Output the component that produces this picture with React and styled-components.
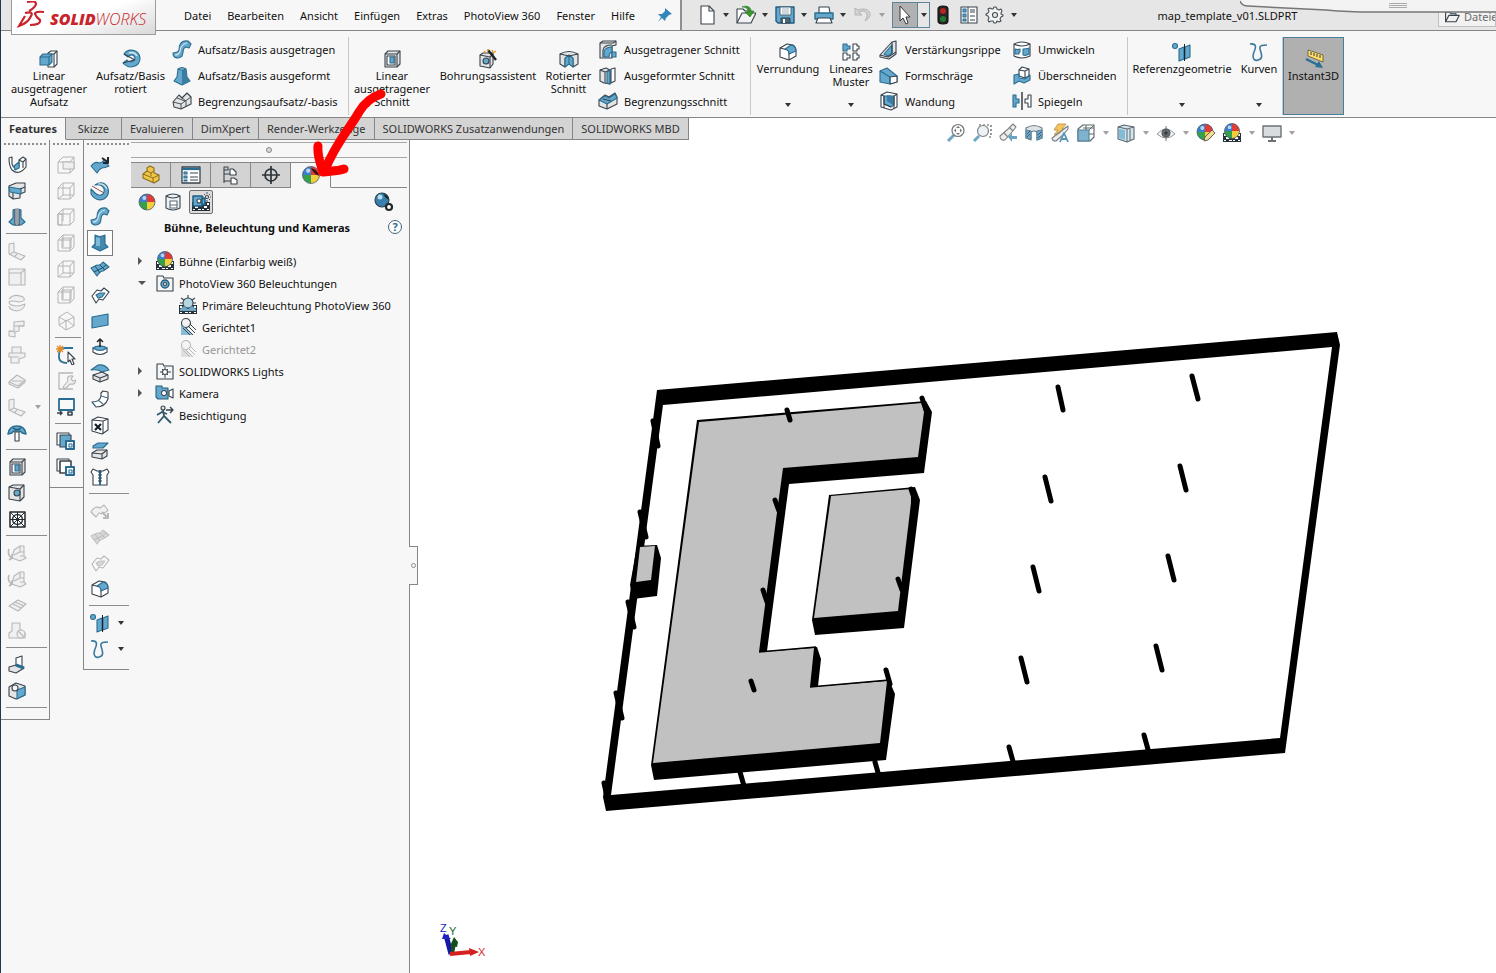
import React, { useState } from 'react';
import styled, { createGlobalStyle } from 'styled-components';

const K = '#38434c';
const B = '#64a9cd';
const D = '#2a6c90';
const L = '#d9e6ed';
const G = '#e4e4e4';
const W = '#ffffff';
const N = 'none';

const circle = (x, y, r) =>
  `M${x - r} ${y}a${r} ${r} 0 1 0 ${r * 2} 0a${r} ${r} 0 1 0 ${-r * 2} 0z`;

const ball = (x, y, r) => [
  [`M${x} ${y}V${y - r}A${r} ${r} 0 0 0 ${x - r} ${y}z`, '#3b7fd0', N],
  [`M${x} ${y}V${y - r}A${r} ${r} 0 0 1 ${x + r} ${y}z`, '#e23b36', N],
  [`M${x} ${y}H${x - r}A${r} ${r} 0 0 0 ${x} ${y + r}z`, '#35a04c', N],
  [`M${x} ${y}H${x + r}A${r} ${r} 0 0 1 ${x} ${y + r}z`, '#f0cf3a', N],
  [circle(x, y, r), N, '#4f5964', 0.8],
  [circle(x - r / 3, y - r / 2, r / 4), '#ffffffaa', N],
];

const film = [
  ['M1 10H19V19H1z', '#26313a', N],
  ['M2 11h2v2H2zM16 11h2v2h-2zM4 14h3v2H4zM13 14h3v2h-3zM2 17h2v1H2zM7 17h3v1H7zM11 17h2v1h-2zM16 17h2v1h-2z', W, N],
];

const wire = [
  ['M2 7L7 2H18V14L14 18H2zM2 7H14V18M14 7L18 2', N, '#b4b4b4', 1],
];

// every entry: [path, fill, stroke, stroke width]
const icons = {
  extrude: [
    ['M9 4L12 2H18V15L15 18H9z', W, K],
    ['M15 5L18 2M15 5V18M9 5H15', N, K],
    ['M1 8L4 5H13V13L10 16H1z', B, D],
    ['M1 8H10V16M10 8L13 5', N, D],
  ],
  revolve: [
    ['M3 5C7 -1 18 0 19 9C19 18 8 21 2 14L6 11C8 14 14 13 14 9C13 5 9 5 7 8z', B, D],
    ['M3 5L14 11M2 14L13 11', N, K],
    ['M8 4Q13 2 16 7', N, L, 1.4],
  ],
  sweep: [
    ['M1 13C1 19 7 19 10 16C12 12 10 8 14 7L17 8L19 4L16 1C8 0 7 6 7 10C6 13 5 12 1 13z', B, D],
    ['M3 15Q7 15 8 11Q9 4 15 3', N, L],
  ],
  loft: [
    ['M6 3Q10 0 14 3L15 11L18 15L10 19L2 15L5 11z', B, D],
    ['M10 4L14 3L15 11L18 15L10 19z', '#3b7da3', N],
    ['M6 3Q10 5 14 3', L, D],
  ],
  boundary: [
    ['M1 11L7 4L10 7L15 2L19 6V13L9 18L2 16z', G, K],
    ['M1 11L9 13L19 6M9 13V18M5 7L13 10M10 7L14 10V15', N, K, 0.9],
  ],
  cut: [
    ['M3 5L6 2H18V15L15 18H3z', G, K],
    ['M3 5H15V18M15 5L18 2', N, K],
    ['M5 7H13V16H5z', W, K],
    ['M8 8H12V14H8z', B, D],
  ],
  wizard: [
    ['M2 6L5 4H15V15L12 19L2 17z', G, K],
    ['M2 6L12 8V19M12 8L15 5', N, K],
    [circle(8, 12, 3), B, K],
    ['M10 1L18 11', N, '#1d2226', 2.4],
    ['M6 2l2 2M10 0v2M14 1l1 2M15 4l3-2', N, '#e59b22', 1.4],
  ],
  revcut: [
    ['M1 5Q10 0 19 5V15L14 18V10L10 7L6 10V18L1 15z', G, K],
    ['M6 9L10 6V15L6 18zM10 6L14 9V18L10 15z', B, D],
    ['M1 5L10 7L19 5', N, K],
  ],
  sweepcut: [
    ['M2 3L5 1H18V5L14 6V18H2z', G, K],
    ['M2 3H15L18 1M5 17V10Q6 5 14 5', N, K],
    ['M6 17V11Q8 7 14 7V12Q11 13 11 17zM14 12H18V17H14z', B, D],
  ],
  loftcut: [
    ['M2 4L8 2L12 4V18L6 17L2 15z', G, K],
    ['M2 4L7 6V17M7 6L12 4', N, K],
    ['M9 6L12 4V18L9 17z', B, D],
    ['M13 3L17 2V15L13 17z', W, K],
  ],
  boundcut: [
    ['M1 9L7 4L11 6L17 2L19 6V13L9 18L1 15z', G, K],
    ['M1 9L7 5L11 7L17 3L19 7L9 13z', B, D],
    ['M9 13V18M5 8L13 10', N, K],
  ],
  fillet: [
    ['M2 6L9 2L15 3Q18 5 18 9V14L11 18L2 15z', W, K],
    ['M2 6L10 8Q11 9 11 11V18', N, K],
    ['M7 7L13 3Q18 4 18 9L11 12Q11 8 7 7z', B, D],
  ],
  pattern: [
    ['M2 2H6V4H9V7H6V9H2z', B, D],
    ['M12 2H16V4H18V7H16V9H12zM2 11H6V13H9V16H6V18H2zM12 11H16V13H18V16H16V18H12z', W, K],
  ],
  rib: [
    ['M1 15L13 2L17 1V14L10 19L1 17z', G, K],
    ['M5 14L13 5V13L9 16z', B, D],
    ['M1 15L9 17L17 12M13 2V13', N, K],
  ],
  draft: [
    ['M1 5L8 2L18 10V16L11 18L1 16z', B, D],
    ['M11 11L18 10V16L11 18z', W, K],
    ['M1 5L11 11V18', N, D],
  ],
  shell: [
    ['M2 4L8 1L18 3V16L12 19L2 16z', W, K],
    ['M5 5L15 5V14L12 16L5 13z', B, D],
    ['M8 4V10L14 14V5z', '#3b7da3', N],
    ['M2 4L5 5V17M15 5L18 3M15 5V17M5 13L12 16', N, K],
  ],
  wrap: [
    ['M2 4Q10 0 18 4V16Q10 20 2 16z', W, K],
    ['M2 4Q10 8 18 4', N, K],
    ['M3 9Q6 10 8 9V12H7V14Q5 14 3 14zM11 9Q15 9 17 8V14Q14 16 11 15z', B, D],
  ],
  intersect: [
    ['M7 4L10 1L17 3V10L13 12L7 10z', W, K],
    ['M7 4L13 5V12M13 5L17 3', N, K],
    ['M2 9L7 8V12L13 13L18 9V14L12 17L7 15L2 18z', B, D],
  ],
  mirror: [
    ['M1 4H4V8H7V12H4V16H1z', B, D],
    ['M19 4H16V8H13V12H16V16H19z', W, K],
    ['M10 1V19', N, '#1d2226', 1.3],
  ],
  refgeo: [
    [circle(3, 4, 2.5), B, D],
    ['M7 7L12 5V17L7 19zM13 5L18 3V15L13 17z', B, D],
    ['M12.5 2V19', N, '#1d2226', 1],
  ],
  curves: [['M1 2C8 1 7 6 5 10C2 18 7 19 9 18C15 17 12 11 11 7C10 3 14 3 18 3', N, '#3d7a9d', 1.6]],
  instant: [
    ['M4 1L19 6V13L4 7z', '#ffdf66', '#5d5330', 0.8],
    ['M7 3v3M10 4v3M13 5v3M16 6v3', N, K],
    ['M2 10L14 16', N, '#2b7093', 2.4],
    ['M11 18L19 19L15 12z', '#2b7093', N],
  ],
  pin: [['M10 3L17 9L14 10L11 13L10 16L7 13L3 17L6 12L3 9L7 9L10 6z', '#3586b8', N]],
  file: [['M4 1H12L17 6V19H4z', W, K], ['M12 1V6H17', N, K]],
  open: [
    ['M1 18V4H7L9 6H15V9', W, K],
    ['M1 18L6 8H20L15 18z', '#f1f3f4', K],
    ['M6 2C11 2 12 4 12 7H9L14 12L18 6H15C15 2 11 0 6 2z', '#3c982e', '#24731f', 0.6],
  ],
  save: [
    ['M1 2H19V18H3L1 16z', B, '#1f5e82', 1.4],
    ['M5 2H16V10H5z', W, '#4d6675', 1],
    ['M7 4h7M7 6h7M7 8h7', N, '#8ea0ab', 0.8],
    ['M6 13H15V18H6z', '#49687c', K, 1],
    ['M8 14H10V18H8z', W, N],
  ],
  print: [
    ['M5 8V2H15L16 8', W, K],
    ['M1 8H19V14H1z', B, D, 1.4],
    ['M4 13H16L18 18H2z', W, K],
  ],
  undo: [['M2 3V10H9L6 7C12 4 17 8 12 16C22 10 16 1 5 5z', '#d2d2d2', '#b5b5b5', 1]],
  cursor: [['M5 1V16L8 13L11 19L13 18L11 12H15z', W, '#30373d', 1]],
  traffic: [
    ['M10 1Q15 1 15 4V16Q15 19 10 19Q5 19 5 16V4Q5 1 10 1z', '#252525', '#111'],
    [circle(10, 6, 3), '#b52525', N],
    [circle(10, 14, 3), '#1d7a35', N],
  ],
  list: [
    ['M2 2H18V18H2z', W, K],
    ['M4 4h3v3H4zM4 9h3v3H4zM4 14h3v2H4z', B, D],
    ['M9 2V18M11 5h5M11 7h5M11 11h5M11 15h5', N, K, 1],
  ],
  gear: [
    ['M9 2h2l1 2 2 1 2-1 1 2-1 2 0 1 2 1v1l-2 1-1 2 1 2-2 1-2-1-1 2h-2l-1-2-2 0-2 1-1-2 1-2-1-2-2-1v-1l2-1 1-2-1-2 2-1 2 1 1 0z', '#f4f4f4', '#454e55'],
    [circle(10, 10, 2.5), '#eaeaea', '#454e55'],
  ],
  folder: [['M2 16V4H7L9 6H15V8M2 16L6 8H19L15 16z', N, K, 1.4]],
  zoomfit: [
    ['M2 18L8 12', N, '#6fa6c4', 3],
    [circle(12, 7.5, 6), '#fbfbfb', '#70777c', 1.2],
    ['M12 3l2 2h-4zM12 12l2-2h-4zM8 7.5l2-2v4zM16 7.5l-2-2v4z', '#70777c', N],
  ],
  zoomarea: [
    ['M7 2H9M11 2H13M15 2H17M19 2V4M19 6V8M19 10V12M19 14H17', N, '#555', 1.2],
    ['M2 18L7 13', N, '#6fa6c4', 3],
    [circle(11, 8, 5.5), '#eef2f4', '#7c8387', 1.2],
  ],
  prev: [
    ['M2 13L10 6L15 1L18 4L14 9L7 17Q2 18 2 13z', '#ececec', '#7d8387'],
    ['M6 10L10 14M12 5L15 8', N, '#7d8387'],
    ['M10 14L14 10V13H19V16H14V19z', '#6aa3c1', N],
  ],
  section: [
    ['M2 5Q10 0 18 5V15L13 17V9Q10 7 7 9V17L2 15z', '#dfe3e5', '#747b80'],
    ['M2 7L7 8V16L2 15zM13 8L18 7V15L13 17z', '#6ea9c8', '#55859f'],
    ['M3 11l3-3M3 14l3-3M14 12l3-3M14 15l3-3', N, '#345c70', 1],
  ],
  style: [
    ['M8 1H16L12 6H15L4 12L8 7H4z', '#f5c55c', '#b48b44', 0.8],
    ['M2 15L9 10L15 5L18 3L18 6L13 12L6 18Q2 18 2 15z', '#ececec', '#787f84'],
    ['M10 19L14 10L18 19M12 16H16', N, '#5795b5', 1.8],
  ],
  orient: [
    ['M2 6L7 2H18V14L14 18H2z', W, '#5c666d'],
    ['M2 7H13V18H2z', '#7fb3cd', '#4f7f98'],
    ['M13 7L18 2M7 5H18M10 2V7M13 11H18', N, '#5c666d', 1],
  ],
  display: [
    ['M2 4L8 2L18 4V16L11 19L2 16z', '#d3e5ee', '#5c666d'],
    ['M2 4L11 6V19M11 6L18 4M14 6V17', N, '#5c666d', 1],
    ['M3 6L9 7V17L3 15z', '#83bad5', N],
  ],
  eye: [
    ['M1 11Q10 1 19 11Q10 19 1 11z', '#f4f4f4', '#909598', 1],
    [circle(10, 10, 4), '#656c71', '#50575c'],
    [circle(10, 10, 1.5), '#222', N],
    ['M10 3V18', N, '#555', 0.8],
  ],
  paint: [...ball(9, 9, 8), ['M9 14L16 7L19 10L12 17L8 18z', '#f1dc97', '#6b604a', 1]],
  scene: [...film, ...ball(10, 8, 7.5)],
  monitor: [
    ['M1 3H19V14H1z', '#d9dcde', '#6b7378', 1.4],
    ['M10 14V17M6 18H14', N, '#6b7378', 2],
  ],
  part: [
    ['M2 9L6 6V3L9 1L13 3V8L18 10V15L13 18L2 13z', '#f1c644', '#8a6d1f'],
    ['M2 9L12 13L18 10M12 13V18M6 6L10 8V11M10 8L13 6', N, '#8a6d1f', 1],
  ],
  property: [
    ['M1 2H19V18H1z', W, K, 1.3],
    ['M1 4H19', N, D, 2.2],
    ['M3 7h3v2H3zM3 11h3v2H3zM3 15h3v1H3z', B, D],
    ['M9 8h8M9 12h8M9 15h8', N, K, 1],
  ],
  config: [
    ['M3 2H7V5H3zM3 5V18M3 9H10M3 16H10', N, K],
    ['M9 4H12L15 7V10H9zM10 13H13L16 15V19H10z', W, K],
  ],
  target: [[circle(10, 10, 6), N, '#2c343a', 1.7], ['M10 1V19M1 10H19', N, '#2c343a', 1.7]],
  appearance: [...ball(10, 10, 8.5), ['M10 3Q16 4 18 11Q13 9 10 3z', '#2b1710', N]],
  ball: ball(10, 10, 8),
  decal: [
    ['M3 4Q10 0 17 4V16Q10 20 3 16z', '#eef1f3', K],
    ['M3 4Q10 8 17 4', N, K],
    ['M7 9H14V16H7zM7 13H14', W, '#5b6c77'],
  ],
  stage: [
    ...film,
    ['M2 4H11V14H2zM11 7L14 6V13L11 12z', B, '#1f5e82', 1.5],
    [circle(8, 9, 2), W, K],
    [circle(16, 5, 1.5), W, K],
    ['M16 0v2M16 8v2M11 5h2M19 5h1M13 2l1 1M19 2l-1 1M19 8l-1-1', N, K, 0.9],
  ],
  options: [
    [circle(8, 8, 7), '#397fab', '#243e4e'],
    [circle(6, 5, 2.5), '#b7dced', N],
    ['M9 2Q14 3 15 8L12 6z', '#1d2226', N],
    [circle(15, 15, 3), W, '#20272c', 2.2],
  ],
  pvfolder: [
    ['M2 18V3H8L9 5H18V18z', '#f4f6f7', K],
    [circle(10, 11, 4), B, '#275a76', 1.3],
    [circle(10, 11, 1.5), W, K],
  ],
  primary: [
    ...film,
    ['M10 0v3M3 3l3 2M17 3l-3 2M2 8h3M15 8h3', N, K],
    [circle(10, 8, 5), '#b5d6e4', K],
    ['M2 14L6 11L10 14L14 11L18 14V16H2z', '#6ea8c4', N],
  ],
  light: [
    ['M3 6V18H15z', '#89bdd6', N],
    [circle(8, 6, 4.5), '#f2f2f2', K],
    ['M5 11L12 18M8 11L15 18M11 10L17 16M12 7L18 13', N, K, 1],
  ],
  swfolder: [
    ['M2 18V3H8L9 5H18V18z', '#f4f6f7', K],
    [circle(10, 11, 2.5), W, K],
    ['M10 6v2M10 14v3M5 11h2M13 11h3M7 8l1 1M13 8l-1 1M7 14l1-1M13 14l-1-1', N, K, 1],
  ],
  camera: [
    ['M1 3H7V5H13V16H3L1 14z', B, '#285f7d'],
    ['M14 8L18 6V15L14 13z', W, K],
    [circle(9, 10, 2.5), W, K],
  ],
  walk: [
    [circle(8, 3, 2), L, K],
    ['M8 5L9 11L3 18M9 11L16 18M2 10L7 7L12 9', N, '#34596c', 1.8],
    ['M11 5H18M15 2L18 5L15 8', N, K, 1.4],
  ],
  ubend: [
    ['M2 3L5 2V9Q7 15 12 12V5L16 2L19 4V12Q12 21 5 15Q2 11 2 3z', W, K],
    ['M7 11L12 7V13L8 15z', B, D],
    ['M12 5L16 7L19 4M16 7V13', N, K],
  ],
  jog: [
    ['M2 5L9 2H18V11L13 13V17L6 18L2 15z', G, K],
    ['M2 6L14 8V13L3 11z', B, D],
    ['M13 8L18 6M6 12V18', N, K],
  ],
  split: [
    ['M6 3Q10 1 14 3V11L18 15L14 18H6L2 15L6 11z', B, D],
    ['M8 2V18H12V2', W, K],
    ['M10 2V17', N, K, 1],
  ],
  sheet: [['M2 3L7 2V11L18 15L14 19L2 13z', G, K], ['M7 11L3 13M10 13l-3 3', N, K]],
  miter: [['M2 2H18V18H2zM2 6H14V18M14 6L18 2', G, K]],
  hem: [['M2 6Q7 0 16 4Q20 8 12 9Q3 7 2 9Q2 13 12 13L18 11Q17 17 10 18Q2 17 2 13', G, K]],
  step: [['M7 3L17 2V7H12V12L8 13V18L2 17V12H7z', G, K], ['M7 7H17M2 12L8 13', N, K]],
  stack: [['M5 2H14V8H18V12L12 14V18H4V12H2V8H5z', G, K], ['M5 8H14M4 12H12', N, K]],
  flat: [['M2 11L10 4L18 9L11 15z', G, K], ['M2 11V13L11 17L18 11V9M5 10L15 10', N, K]],
  mushroom: [
    ['M1 11Q2 3 10 3Q18 3 19 11L15 10Q14 8 12 8H8Q6 8 5 10z', B, D, 1.5],
    ['M8 9H12V18H8z', W, K],
    ['M6 5Q10 8 14 5', N, '#1f4f69'],
  ],
  hole: [['M2 4L6 2H17V14L13 18L2 16z', G, K], ['M2 4L13 6V18M13 6L17 2', N, K], [circle(10, 10, 3), B, K]],
  vent: [
    ['M3 3H18V18H3z', W, '#22282d', 1.5],
    [circle(10.5, 10.5, 5), N, K, 1.5],
    ['M3 3L18 18M18 3L3 18M10.5 3V18M3 10.5H18', N, '#22282d', 1],
  ],
  unfold: [
    ['M7 7L13 3H17V13L19 15L13 18L5 15z', G, K],
    ['M7 12L13 9V3M13 9H17M13 13L17 13', N, K],
    ['M2 6Q0 12 5 15L2 17M5 15V11', N, K, 1.6],
  ],
  grid: [['M2 11L11 5L19 9L11 16z', G, K], ['M6 9L14 13M8 7L17 11', N, K]],
  deny: [['M5 2H13V9L18 12V17H2V12L5 10z', G, K], [circle(14, 13, 4), G, K], ['M11 10l6 6', N, K]],
  corner: [['M9 3L15 1V12L9 15z', W, K], ['M2 12L9 10L17 13L9 18L2 16z', G, K], ['M9 10L17 13', N, D, 3]],
  gusset: [
    ['M2 6L9 2L18 5V14L9 18L2 15z', G, K],
    ['M10 9L18 6V14L10 18z', B, D],
    [circle(8, 7, 3), '#f6f6f6', K],
  ],
  wire1: [...wire, ['M7 7H18V14H7z', '#efefef', '#b4b4b4', 1]],
  wire2: [...wire, ['M7 2V14H18M7 14L2 18', N, '#b4b4b4', 1]],
  wire3: [...wire, ['M2 7V18H6V7zM7 2V14', N, '#b4b4b4', 1]],
  wire4: [...wire, ['M6 5H15V15H6zM7 2V14', N, '#b4b4b4', 1]],
  wireiso: [['M3 6L11 1L18 6V15L10 19L3 14zM3 6L10 10L18 6M10 10V19M3 14L11 9L18 15', N, '#b4b4b4', 1]],
  sketch: [
    ['M17 3H9Q3 3 3 10V13Q4 18 11 18', N, '#2f7397', 1.8],
    ['M4 0v8M0 4h8M1 1l6 6M7 1L1 7', N, '#e58b24', 1.3],
    ['M12 7V17L14 15L16 20L18 19L16 14H19z', W, K],
  ],
  repair: [['M17 2H3V18H17', N, K, 1.3], ['M7 16L12 10Q10 4 17 5L15 8L17 10L20 9Q19 14 14 13L9 18z', G, K]],
  convert: [
    ['M3 2H18V13H3z', '#f9f9f9', '#286c92', 1.8],
    ['M1 16H6M4 14L6 16L4 18M12 15H16V18H12z', N, K, 1.6],
  ],
  copies: [
    ['M1 2H13V14H1z', W, K],
    ['M4 4H15V16H4z', B, K],
    ['M10 10H18V18H10z', W, D, 2],
    ['M13 13h3v3h-3z', W, D],
  ],
  copies2: [
    ['M1 2H13V14H1z', W, K],
    ['M4 4H15V16H4z', W, K, 1.6],
    ['M10 10H18V18H10z', W, D, 2],
    ['M13 13h3v3h-3z', W, D],
  ],
  surface: [['M1 11Q5 6 9 8Q12 8 14 5L19 11Q15 13 12 13Q9 14 7 18z', B, D], ['M12 3L18 7M18 2V8H13', N, '#20272c', 2]],
  ring: [
    ['M5 4Q12 -1 17 5Q21 13 14 18Q6 21 1 13L1 8L5 12Q9 16 13 13Q16 8 12 5Q9 3 5 4z', B, D],
    ['M2 5L14 12', N, '#9a4b4b', 1],
    ['M8 3Q14 2 17 8', N, L],
  ],
  loftsurf: [
    ['M5 2Q10 5 15 2V11L18 14L10 18L2 14L5 11z', '#4389b0', D],
    ['M6 4Q8 5 10 5V13H6z', '#7fbbd9', N],
  ],
  patch: [
    ['M1 9L7 6Q10 7 13 3L19 8L13 12Q10 12 7 17z', B, D],
    ['M4 13L10 10Q13 9 16 6M5 7L10 14M10 6L15 11', N, '#1f4f69', 1],
  ],
  offset: [['M2 11L7 5L11 6L14 3L19 7L13 15L9 14L6 18z', W, K], ['M6 10L10 8L15 8L12 12L8 13z', B, D]],
  plane: [['M2 6L18 3V14L2 17z', B, D, 1.2]],
  knit: [
    ['M3 11Q10 7 17 11V15Q10 20 3 15z', W, K],
    ['M3 11Q10 7 17 11Q10 16 3 11z', B, D],
    ['M10 10V2M7 5L10 2L13 5', N, '#20272c', 1.5],
  ],
  thicken: [['M1 7L8 2Q15 1 19 7L12 9Q8 6 1 7z', B, D], ['M3 12L12 9L18 12V16L10 19L3 16z', G, K], ['M3 12L10 15L18 12M10 15V19', N, K]],
  elbow: [['M13 2L18 3V10Q15 18 6 18L2 13Q10 13 11 7V4z', W, K], ['M11 7L18 9M2 13L6 18M8 11L13 15', N, '#40728b']],
  delface: [['M2 5L8 2L18 4V15L12 19L2 16z', W, K], ['M2 5L13 6V19M13 6L18 4', N, K], ['M5 9l6 6M11 9l-6 6', N, '#152027', 2.2]],
  replace: [['M3 5L8 2H18L13 7L3 7z', B, D], ['M2 12L7 9H17V15L12 18L2 16z', G, K], ['M2 12L12 13V18M12 13L17 9', N, K]],
  zip: [
    ['M3 2L7 4H13L17 2L19 5L17 8V18H3V8L1 5z', W, K],
    ['M10 3V18', N, D, 2],
    ['M8 5h4M8 8h4M8 11h4M8 14h4', N, K, 1],
  ],
  trim: [['M1 11Q5 4 10 7L14 4L18 9Q14 14 9 12L6 16z', G, K], ['M12 11l6 6M18 12v5h-5', N, K, 2]],
};

function Icon({ name, dim }) {
  return (
    <Glyph viewBox="0 0 20 20" $dim={dim} aria-hidden="true">
      {icons[name].map(([d, fill, stroke, width = 1.1], i) => (
        <path key={i} d={d} fill={fill} stroke={stroke} strokeWidth={width} strokeLinejoin="round" />
      ))}
    </Glyph>
  );
}

const menus = ['Datei', 'Bearbeiten', 'Ansicht', 'Einfügen', 'Extras', 'PhotoView 360', 'Fenster', 'Hilfe'];

const quick = [
  ['file', 'Neu'],
  ['open', 'Öffnen'],
  ['save', 'Speichern'],
  ['print', 'Drucken'],
  ['undo', 'Rückgängig'],
];

const tabs = [
  'Features',
  'Skizze',
  'Evaluieren',
  'DimXpert',
  'Render-Werkzeuge',
  'SOLIDWORKS Zusatzanwendungen',
  'SOLIDWORKS MBD',
];

const hud = [
  ['zoomfit'],
  ['zoomarea'],
  ['prev'],
  ['section'],
  ['style'],
  ['orient', true],
  ['display', true],
  ['eye', true],
  ['paint'],
  ['scene', true],
  ['monitor', true],
];

// '-' is a separator, '!' greys a tool out, '*' marks the pressed one, '>' adds a menu arrow
const sheetTools = [
  'ubend', 'jog', 'split', '-',
  '!sheet', '!miter', '!hem', '!step', '!stack', '!flat', '!sheet>', 'mushroom', '-',
  'cut', 'hole', 'vent', '-',
  '!unfold', '!unfold', '!grid', '!deny', '-',
  'corner', 'gusset', '-',
];
const viewTools = [
  'wire1', 'wire2', 'wire3', 'wire4', 'wire2', 'wire4', 'wireiso', '-',
  'sketch', '!repair', 'convert', '-',
  'copies', 'copies2',
];
const surfaceTools = [
  'surface', 'ring', 'sweep', '*loftsurf', 'patch', 'offset', 'plane', 'knit', 'thicken',
  'elbow', 'delface', 'replace', 'zip', '-',
  '!trim', '!patch', '!offset', 'fillet', '-',
  'refgeo>', 'curves>',
];

const tree = [
  { icon: 'scene', label: 'Bühne (Einfarbig weiß)', arrow: 'right' },
  { icon: 'pvfolder', label: 'PhotoView 360 Beleuchtungen', arrow: 'down' },
  { icon: 'primary', label: 'Primäre Beleuchtung PhotoView 360', level: 1 },
  { icon: 'light', label: 'Gerichtet1', level: 1 },
  { icon: 'light', label: 'Gerichtet2', level: 1, off: true },
  { icon: 'swfolder', label: 'SOLIDWORKS Lights', arrow: 'right' },
  { icon: 'camera', label: 'Kamera', arrow: 'right' },
  { icon: 'walk', label: 'Besichtigung' },
];

const poles = [
  [1058, 387, 5, 23], [1192, 376, 6, 23], [1045, 477, 6, 24], [1180, 466, 6, 24],
  [1033, 567, 6, 24], [1168, 556, 6, 24], [1021, 658, 6, 24], [1156, 646, 6, 24],
  [1009, 747, 5, 18], [1144, 735, 5, 18], [740, 772, 4, 14], [875, 762, 4, 14],
  [787, 410, 3, 10], [922, 398, 4, 12], [775, 500, 4, 11], [763, 590, 4, 12],
  [751, 681, 3, 9], [886, 670, 4, 14], [911, 489, 4, 12], [898, 579, 4, 11],
  [653, 421, 5, 25], [640, 512, 6, 25], [628, 602, 6, 25], [616, 693, 6, 25],
  [604, 783, 3, 14],
];

function Toolbar({ tools, label, width }) {
  return (
    <Bar role="toolbar" aria-label={label} $width={width}>
      <Grip />
      {tools.map((tool, i) => {
        if (tool === '-') return <Rule key={i} />;
        const name = tool.replace(/[!*>]/g, '');
        return (
          <ToolRow key={i}>
            <Tool type="button" aria-label={name} disabled={tool[0] === '!'} $on={tool[0] === '*'}>
              <Icon name={name} dim={tool[0] === '!'} />
            </Tool>
            {tool.endsWith('>') && <Caret $muted={tool[0] === '!'} />}
          </ToolRow>
        );
      })}
    </Bar>
  );
}

function Big({ icon, lines, width, menu, on }) {
  return (
    <BigButton type="button" $width={width} $menu={menu} $on={on}>
      <Icon name={icon} />
      {lines.map((line) => (
        <span key={line}>{line}</span>
      ))}
      {menu && <Caret />}
    </BigButton>
  );
}

function Stack({ items, width }) {
  return (
    <StackColumn $width={width}>
      {items.map(([icon, label]) => (
        <SmallButton type="button" key={label}>
          <Icon name={icon} />
          {label}
        </SmallButton>
      ))}
    </StackColumn>
  );
}

function Model() {
  return (
    <Drawing viewBox="410 140 1086 833" role="img" aria-label="map_template_v01">
      <path
        fillRule="evenodd"
        d="M657 390L1337 332L1340 345L1285 753L606 811L603 797zM663 405L611 795L1280 738L1332 347z"
      />
      <path d="M697 420L926 401L932 412L924 473L789 484L767 651L817 647L821 659L818 686L889 680L895 694L886 760L654 780L651 765z" />
      <path
        fill="#c1c1c1"
        d="M699 422L922 403L924 412L918 457L783 468L776 520L759 652L814 648L810 687L887 681L880 743L653 763z"
      />
      <path d="M829 495L915 487L920 500L904 628L815 635L812 620z" />
      <path fill="#c1c1c1" d="M831 496L911 489L911 503L898 611L814 618z" />
      <path d="M637 546L657 545L661 558L657 596L633 599L630 585z" />
      <path fill="#c1c1c1" d="M640 547L655 546L651 580L636 582z" />
      <path d="M759 652L816 647M810 687L889 680" stroke="#000" strokeWidth="1.4" />
      {poles.map(([x, y, dx, dy]) => (
        <path key={`${x}-${y}`} d={`M${x} ${y}l${dx} ${dy}`} stroke="#000" strokeWidth="5" strokeLinecap="round" />
      ))}
    </Drawing>
  );
}

function App() {
  const [tab, setTab] = useState('Features');
  const [selected, setSelected] = useState(null);

  return (
    <Page>
      <GlobalStyle />
      <TitleBar>
        <MenuArea>
          <Logo>
            <svg viewBox="0 0 30 28" width="30" height="28" aria-hidden="true">
              <path
                d="M11 1Q20 -1 20 3Q19 7 13 10M9 12Q18 10 15 15Q12 22 3 25L9 15M28 11Q19 10 19 13Q20 16 24 19Q25 24 14 24"
                fill="none"
                stroke="#c9242b"
                strokeWidth="2.2"
              />
            </svg>
            <b>SOLID</b>
            <i>WORKS</i>
          </Logo>
          <Menu>
            {menus.map((item) => (
              <button type="button" key={item}>
                {item}
              </button>
            ))}
          </Menu>
          <Plain type="button" aria-label="Anheften">
            <Icon name="pin" />
          </Plain>
        </MenuArea>
        <Quick>
          {quick.map(([icon, label]) => (
            <Split key={icon}>
              <Plain type="button" aria-label={label}>
                <Icon name={icon} />
              </Plain>
              <Caret $muted={icon === 'undo'} />
            </Split>
          ))}
          <Picker>
            <Plain type="button" aria-label="Auswählen">
              <Icon name="cursor" />
            </Plain>
            <Caret />
          </Picker>
          <QuickTail>
            <Icon name="traffic" />
            <Icon name="list" />
            <Icon name="gear" />
            <Caret />
          </QuickTail>
        </Quick>
        <FileName>map_template_v01.SLDPRT</FileName>
        <Search>
          <Icon name="folder" />
          <input aria-label="Suche" placeholder="Dateien und Modelle durchsuchen" />
        </Search>
        <Flyout viewBox="0 0 256 16" aria-hidden="true">
          <path d="M0 0Q2 6 8 6L86 10Q110 12 130 12H256V0z" fill="#f3f3f3" />
          <path d="M0 1Q2 6 8 6L86 10Q110 12 130 12H256" fill="none" stroke="#777" strokeWidth="1.5" />
          <path d="M149 3.5h18M149 5.5h18M149 7.5h18" stroke="#a9a9a9" strokeWidth="1" />
        </Flyout>
      </TitleBar>

      <Ribbon>
        <Big icon="extrude" lines={['Linear', 'ausgetragener', 'Aufsatz']} width={84} />
        <Big icon="revolve" lines={['Aufsatz/Basis', 'rotiert']} width={79} />
        <Stack
          width={178}
          items={[
            ['sweep', 'Aufsatz/Basis ausgetragen'],
            ['loft', 'Aufsatz/Basis ausgeformt'],
            ['boundary', 'Begrenzungsaufsatz/-basis'],
          ]}
        />
        <Divider />
        <Big icon="cut" lines={['Linear', 'ausgetragener', 'Schnitt']} width={86} />
        <Big icon="wizard" lines={['Bohrungsassistent']} width={106} />
        <Big icon="revcut" lines={['Rotierter', 'Schnitt']} width={55} />
        <Stack
          width={154}
          items={[
            ['sweepcut', 'Ausgetragener Schnitt'],
            ['loftcut', 'Ausgeformter Schnitt'],
            ['boundcut', 'Begrenzungsschnitt'],
          ]}
        />
        <Divider />
        <Big icon="fillet" lines={['Verrundung']} width={74} menu />
        <Big icon="pattern" lines={['Lineares', 'Muster']} width={52} menu />
        <Stack
          width={133}
          items={[
            ['rib', 'Verstärkungsrippe'],
            ['draft', 'Formschräge'],
            ['shell', 'Wandung'],
          ]}
        />
        <Stack
          width={117}
          items={[
            ['wrap', 'Umwickeln'],
            ['intersect', 'Überschneiden'],
            ['mirror', 'Spiegeln'],
          ]}
        />
        <Divider />
        <Big icon="refgeo" lines={['Referenzgeometrie']} width={108} menu />
        <Big icon="curves" lines={['Kurven']} width={46} menu />
        <Divider />
        <Big icon="instant" lines={['Instant3D']} width={61} on />
      </Ribbon>

      <TabRow>
        <Tabs role="tablist">
          {tabs.map((item) => (
            <Tab
              type="button"
              role="tab"
              key={item}
              aria-selected={item === tab}
              $on={item === tab}
              onClick={() => setTab(item)}
            >
              {item}
            </Tab>
          ))}
        </Tabs>
        <Hud>
          {hud.map(([icon, menu]) => (
            <HudItem key={icon}>
              <Plain type="button" aria-label={icon}>
                <Icon name={icon} />
              </Plain>
              {menu ? <Caret $muted /> : null}
            </HudItem>
          ))}
        </Hud>
      </TabRow>

      <Workspace>
        <Side>
          <Toolbar tools={sheetTools} label="Blech" width={49} />
          <Toolbar tools={viewTools} label="Ansichten" width={34} />
          <Toolbar tools={surfaceTools} label="Oberflächen" width={46} />
          <Manager>
            <PanelGrip>
              <i />
            </PanelGrip>
            <ManagerTabs>
              {['part', 'property', 'config', 'target', 'appearance'].map((name) => (
                <ManagerTab type="button" key={name} aria-label={name} $on={name === 'appearance'}>
                  <Icon name={name} />
                </ManagerTab>
              ))}
              <TabRest />
            </ManagerTabs>
            <PanelTools>
              <Plain type="button" aria-label="Erscheinungsbilder">
                <Icon name="ball" />
              </Plain>
              <Plain type="button" aria-label="Abziehbilder">
                <Icon name="decal" />
              </Plain>
              <Pressed type="button" aria-label="Bühne">
                <Icon name="stage" />
              </Pressed>
              <Plain type="button" aria-label="Optionen">
                <Icon name="options" />
              </Plain>
            </PanelTools>
            <PanelTitle>
              <h2>Bühne, Beleuchtung und Kameras</h2>
              <Help type="button">?</Help>
            </PanelTitle>
            <Tree>
              {tree.map((node) => (
                <Node key={node.label} $level={node.level} $off={node.off}>
                  <Twist>{node.arrow && <Triangle $down={node.arrow === 'down'} />}</Twist>
                  <button type="button" onClick={() => setSelected(node.label)} aria-pressed={selected === node.label}>
                    <Icon name={node.icon} dim={node.off} />
                    {node.label}
                  </button>
                </Node>
              ))}
            </Tree>
          </Manager>
        </Side>
        <Viewport>
          <Handle>
            <i />
          </Handle>
          <Model />
          <Triad viewBox="0 0 52 40">
            <path d="M18 32L13 13" stroke="#1717a8" strokeWidth="5" />
            <path d="M9 17L11 11L18 17z" fill="#2222c0" />
            <path d="M19 32L21 21" stroke="#14501c" strokeWidth="4" />
            <path d="M17 24L21 15L25 20L24 25z" fill="#14501c" />
            <path d="M17 32L38 30" stroke="#d61f1f" strokeWidth="4" />
            <path d="M36 26L46 30L37 34z" fill="#d61f1f" />
            <text x="7" y="10" fill="#2222c0">Z</text>
            <text x="16" y="13" fill="#1a6a26">Y</text>
            <text x="45" y="34" fill="#d61f1f">X</text>
          </Triad>
        </Viewport>
      </Workspace>

      <Marker viewBox="0 0 80 100" aria-hidden="true">
        <path d="M68 15C59 18 52 23 46 33C37 49 22 65 12 91" />
        <path d="M5 67C4 77 8 86 10 93C18 92 25 92 31 90" />
      </Marker>
    </Page>
  );
}

export default App;

const GlobalStyle = createGlobalStyle`
  * {
    box-sizing: border-box;
  }
  body {
    margin: 0;
    background: #f7f7f7;
    overflow-x: hidden;
  }
  body, button, input {
    font-family: 'Noto Sans', 'Open Sans', sans-serif;
    font-size: 11px;
    line-height: 13px;
    color: #111111;
  }
  button {
    padding: 0;
    border: none;
    background: none;
    white-space: nowrap;
  }
`;

const Glyph = styled.svg`
  display: block;
  flex: none;
  width: 20px;
  height: 20px;
  filter: ${({ $dim }) => ($dim ? 'grayscale(1) opacity(0.35)' : 'none')};
`;

const Caret = styled.i`
  flex: none;
  width: 0;
  height: 0;
  border: 3px solid transparent;
  border-top: 4px solid ${({ $muted }) => ($muted ? '#a0a0a0' : '#333333')};
  border-bottom: none;
`;

const Plain = styled.button`
  display: flex;
`;

const Page = styled.div`
  position: relative;
  display: flex;
  flex-direction: column;
  min-height: 100vh;
  border-left: 1px solid #25384a;
  overflow: hidden;
`;

const TitleBar = styled.header`
  position: relative;
  display: flex;
  height: 31px;
  background: #e6e6e6;
  border-bottom: 1px solid #868686;
`;

const MenuArea = styled.div`
  display: flex;
  align-items: center;
  flex: none;
  padding: 0 5px 0 10px;
  background: linear-gradient(to right, #e6e6e6 10px, #f7f7f7 10px);
  border-right: 2px solid #8f8f8f;
`;

const Logo = styled.div`
  position: relative;
  z-index: 1;
  align-self: flex-start;
  display: flex;
  align-items: center;
  width: 145px;
  height: 35px;
  padding: 0 0 4px 4px;
  border: 1px solid #9b9b9b;
  border-top: none;
  background: linear-gradient(160deg, #ffffff 50%, #d8d8d8);
  color: #c9242b;
  font-family: 'Open Sans', sans-serif;
  font-size: 16px;
  font-style: italic;

  svg {
    margin-right: 4px;
  }
  b {
    margin-top: 8px;
    font-weight: 800;
  }
  i {
    margin-top: 8px;
    font-weight: 300;
  }
`;

const Menu = styled.nav`
  display: flex;
  gap: 16px;
  margin: 0 20px 0 28px;
`;

const Quick = styled.div`
  display: flex;
  align-items: center;
  flex: none;
  padding-left: 15px;
`;

const Split = styled.div`
  display: flex;
  align-items: center;
  gap: 6px;
  width: 39px;
`;

const Picker = styled.div`
  display: flex;
  align-items: center;
  width: 38px;
  height: 26px;
  border: 1px solid #5f8399;

  button {
    width: 25px;
    height: 24px;
    margin-right: 3px;
    padding: 2px;
    border-right: 1px solid #5f8399;
    background: #b1b1b1;
  }
`;

const QuickTail = styled.div`
  display: flex;
  align-items: center;
  gap: 6px;
  padding-left: 3px;
`;

const FileName = styled.div`
  flex: 1;
  padding-top: 9px;
  text-align: center;
`;

const Search = styled.label`
  display: flex;
  align-items: center;
  flex: none;
  width: 58px;
  height: 27px;
  padding: 6px 0 0 5px;
  border: 1px solid #c0c0c0;
  background: #f2f2f2;
  overflow: hidden;

  svg {
    width: 16px;
  }
  input {
    width: 36px;
    margin-left: 4px;
    padding: 0;
    border: none;
    outline: none;
    background: none;
  }
  input::placeholder {
    color: #6c6c6c;
  }
`;

const Flyout = styled.svg`
  position: absolute;
  top: 0;
  right: 0;
  width: 256px;
  height: 16px;
`;

const Ribbon = styled.section`
  display: flex;
  height: 87px;
  padding: 6px 0 3px 6px;
  border-bottom: 1px solid #868686;
`;

const BigButton = styled.button`
  display: flex;
  flex-direction: column;
  align-items: center;
  flex: none;
  width: ${({ $width }) => $width}px;
  height: 78px;
  padding-top: ${({ $menu }) => ($menu ? 4 : 11)}px;
  border: 1px solid ${({ $on }) => ($on ? '#4a7d9c' : 'transparent')};
  background: ${({ $on }) => ($on ? '#b0b0b0' : 'none')};

  i {
    margin: auto 0 7px;
  }
`;

const StackColumn = styled.div`
  display: flex;
  flex-direction: column;
  flex: none;
  width: ${({ $width }) => $width}px;
  padding-left: 2px;
`;

const SmallButton = styled.button`
  display: flex;
  align-items: center;
  gap: 6px;
  height: 26px;
`;

const Divider = styled.div`
  flex: none;
  width: 1px;
  height: 78px;
  background: #c8c8c8;
`;

const TabRow = styled.div`
  display: flex;
  align-items: flex-start;
  height: 22px;
  background: #ffffff;
`;

const Tabs = styled.div`
  display: flex;
  flex: none;
`;

const Tab = styled.button`
  min-width: 56px;
  height: 22px;
  padding: 0 8px;
  border-right: 1px solid #868686;
  border-bottom: 1px solid ${({ $on }) => ($on ? '#f7f7f7' : '#868686')};
  background: ${({ $on }) => ($on ? '#f7f7f7' : '#d4d4d4')};
  color: #333333;
  font-weight: ${({ $on }) => ($on ? 700 : 400)};
`;

const Hud = styled.div`
  position: relative;
  z-index: 1;
  display: flex;
  flex: none;
  margin: 5px 0 0 257px;
`;

const HudItem = styled.div`
  display: flex;
  align-items: center;
  gap: 6px;
  padding-right: 6px;

  i {
    margin: 0 1px;
  }
`;

const Workspace = styled.main`
  display: flex;
  flex: 1;
`;

const Side = styled.aside`
  display: flex;
  align-items: flex-start;
  flex: none;
  width: 409px;
  border-right: 1px solid #868686;
`;

const Bar = styled.div`
  display: flex;
  flex-direction: column;
  flex: none;
  width: ${({ $width }) => $width}px;
  padding: 3px 2px 7px 5px;
  border-right: 1px solid #868686;
  border-bottom: 1px solid #868686;

  &:nth-child(3) {
    margin-left: -1px;
    border-left: 1px solid #868686;
    border-right: none;
    padding-right: 0;
  }
`;

const Grip = styled.div`
  height: 2px;
  margin: 0 0 7px -2px;
  background: repeating-linear-gradient(to right, #8e8e8e 0 2px, transparent 2px 4px);
`;

const Rule = styled.div`
  height: 1px;
  margin: 3px 0 4px;
  background: #8c8c8c;
`;

const ToolRow = styled.div`
  display: flex;
  align-items: center;
  gap: 5px;
  height: 26px;
`;

const Tool = styled.button`
  width: 26px;
  height: 26px;
  margin-left: -2px;
  padding: 2px;
  border: 1px solid ${({ $on }) => ($on ? '#7b7b7b' : 'transparent')};
  background: ${({ $on }) => ($on ? '#fdfdfd' : 'none')};
`;

const Manager = styled.div`
  flex: 1;
  min-width: 0;
  padding: 2px 2px 0;
`;

const PanelGrip = styled.div`
  display: flex;
  align-items: center;
  justify-content: center;
  height: 16px;
  border: 1px solid #a8a8a8;
  border-width: 1px 0;

  i {
    width: 6px;
    height: 6px;
    border: 1px solid #8a8a8a;
    border-radius: 50%;
    background: #d8d8d8;
  }
`;

const ManagerTabs = styled.div`
  display: flex;
  margin-top: 4px;
`;

const ManagerTab = styled.button`
  display: flex;
  align-items: center;
  justify-content: center;
  width: 40px;
  height: 26px;
  border: 1px solid #868686;
  border-left: none;
  border-bottom-color: ${({ $on }) => ($on ? 'transparent' : '#868686')};
  background: ${({ $on }) => ($on ? 'none' : '#d3d3d3')};
`;

const TabRest = styled.div`
  flex: 1;
  border-bottom: 1px solid #868686;
`;

const PanelTools = styled.div`
  display: flex;
  align-items: center;
  gap: 6px;
  height: 28px;
  padding: 0 13px 0 6px;

  button:last-child {
    margin-left: auto;
  }
`;

const Pressed = styled.button`
  width: 24px;
  height: 24px;
  padding: 1px;
  border: 1px solid #6f6f6f;
  border-radius: 2px;
  background: #dcdcdc;
`;

const PanelTitle = styled.div`
  display: flex;
  align-items: center;
  height: 22px;
  padding-right: 5px;

  h2 {
    flex: 1;
    margin: 0 5px 0 0;
    font-size: 11px;
    font-weight: 700;
    text-align: center;
  }
`;

const Help = styled.button`
  width: 14px;
  height: 14px;
  border: 1px solid #456273;
  border-radius: 50%;
  background: #ffffff;
  color: #2a6c90;
  font-weight: 700;
  line-height: 12px;
`;

const Tree = styled.ul`
  margin: 12px 0 0;
  padding: 0;
  list-style: none;
`;

const Node = styled.li`
  display: flex;
  align-items: center;
  height: 22px;
  padding-left: ${({ $level }) => ($level ? 23 : 0)}px;

  button {
    display: flex;
    align-items: center;
    gap: 4px;
    color: ${({ $off }) => ($off ? '#969696' : '#111111')};
  }
`;

const Twist = styled.span`
  width: 24px;
  padding-left: 7px;
`;

const Triangle = styled.i`
  display: block;
  width: 0;
  height: 0;
  border: 4px solid transparent;
  ${({ $down }) => ($down ? 'border-top-color: #555555; border-bottom: none;' : 'border-left-color: #555555; border-right: none;')}
`;

const Viewport = styled.section`
  position: relative;
  flex: 1;
  min-width: 0;
  background: #ffffff;
`;

const Drawing = styled.svg`
  display: block;
  width: 100%;
`;

const Handle = styled.div`
  position: absolute;
  top: 406px;
  left: -1px;
  display: flex;
  align-items: center;
  justify-content: center;
  width: 9px;
  height: 39px;
  border: 1px solid #868686;
  border-left: none;
  background: #f7f7f7;

  i {
    width: 5px;
    height: 5px;
    border: 1px solid #8a8a8a;
    border-radius: 50%;
  }
`;

const Triad = styled.svg`
  position: absolute;
  left: 23px;
  bottom: 11px;
  width: 52px;
  height: 40px;
  overflow: visible;
  font: 11px 'Liberation Sans', sans-serif;
`;

const Marker = styled.svg`
  position: absolute;
  top: 79px;
  left: 312px;
  width: 80px;
  height: 100px;
  fill: none;
  stroke: #ff0000;
  stroke-width: 9px;
  stroke-linecap: round;
  stroke-linejoin: round;
  pointer-events: none;
`;
